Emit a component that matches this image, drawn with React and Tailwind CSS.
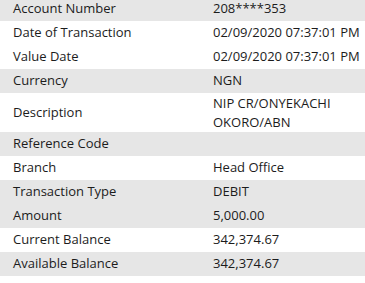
import React from "react"

const rows = [
  { label: "Account Number", value: "208****353", shade: true },
  { label: "Date of Transaction", value: "02/09/2020 07:37:01 PM" },
  { label: "Value Date", value: "02/09/2020 07:37:01 PM" },
  { label: "Currency", value: "NGN", shade: true },
  { label: "Description", value: ["NIP CR/ONYEKACHI", "OKORO/ABN"] },
  { label: "Reference Code", value: "", shade: true },
  { label: "Branch", value: "Head Office" },
  { label: "Transaction Type", value: "DEBIT", shade: true },
  { label: "Amount", value: "5,000.00", shade: true },
  { label: "Current Balance", value: "342,374.67" },
  { label: "Available Balance", value: "342,374.67", shade: true },
]

const App = () => {
  return (
    <div
      className="w-[365px] h-[283px] overflow-hidden bg-white text-[#1c1c1c] text-[13px]"
      style={{ fontFamily: '"Open Sans", "Noto Sans", sans-serif' }}
    >
      <div className="-mt-[3px]">
        {rows.map((row) => (
          <div
            key={row.label}
            className={`flex items-center ${Array.isArray(row.value) ? "h-[39px]" : "h-[24px]"} ${
              row.shade ? "bg-[#e6e6e6]" : "bg-white"
            }`}
          >
            <div className="w-[213px] pl-[13px] whitespace-nowrap">{row.label}</div>
            <div className="flex-1 whitespace-nowrap">
              {Array.isArray(row.value) ? (
                <div className="leading-[19px]">
                  {row.value.map((line) => (
                    <div key={line}>{line}</div>
                  ))}
                </div>
              ) : (
                row.value
              )}
            </div>
          </div>
        ))}
      </div>
    </div>
  )
}

export default App
